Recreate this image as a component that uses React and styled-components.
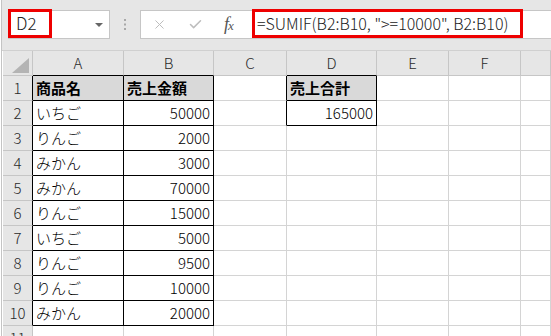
import styled, { createGlobalStyle } from "styled-components";
import { X, Check } from "lucide-react";

const GlobalStyle = createGlobalStyle({
  "*": { boxSizing: "border-box" },
  body: {
    margin: 0,
    background: "#ffffff",
    fontFamily: '"Noto Sans CJK JP", "Noto Sans", sans-serif',
    color: "#000",
  },
});

const Frame = styled.div({
  width: "551px",
  height: "336px",
  overflow: "hidden",
  paddingLeft: "1px",
  background: "#ffffff",
});

const Inner = styled.div({
  height: "100%",
  borderLeft: "1px solid #c4c4c4",
});

const Toolbar = styled.div({
  height: "51px",
  background: "#e6e6e6",
  borderBottom: "1px solid #d0d0d0",
  display: "flex",
  alignItems: "flex-start",
  paddingTop: "10px",
  paddingLeft: "6px",
});

const NameBox = styled.div({
  width: "102px",
  height: "29px",
  background: "#ffffff",
  border: "1px solid #c6c6c6",
  display: "flex",
  alignItems: "flex-start",
});

const RedFrame = styled.div(({ $width, $size, $pad }) => ({
  width: $width,
  height: "29px",
  marginTop: "-2px",
  marginLeft: "-1px",
  border: "3px solid #ee0000",
  fontSize: $size,
  fontWeight: 300,
  lineHeight: "22px",
  color: "#222",
  paddingLeft: $pad,
  whiteSpace: "nowrap",
}));

const Caret = styled.svg({
  marginLeft: "auto",
  marginRight: "6px",
  marginTop: "12px",
});

const Dots = styled.div({
  width: "30px",
  height: "29px",
  display: "flex",
  alignItems: "center",
  justifyContent: "center",
});

const ButtonBox = styled.div({
  width: "113px",
  height: "29px",
  background: "#ffffff",
  border: "1px solid #c6c6c6",
  display: "flex",
  alignItems: "center",
  gap: "21px",
  paddingLeft: "11px",
  color: "#bdbdbd",
});

const Fx = styled.span({
  fontFamily: '"Liberation Serif", serif',
  fontStyle: "italic",
  fontSize: "18px",
  lineHeight: "18px",
  color: "#555",
  letterSpacing: "-1px",
  "& small": { fontSize: "13px" },
});

const FormulaBar = styled.div({
  flex: 1,
  height: "29px",
  background: "#ffffff",
  borderTop: "1px solid #c6c6c6",
  borderBottom: "1px solid #c6c6c6",
  display: "flex",
  alignItems: "flex-start",
});

const Sheet = styled.div({
  paddingLeft: "1px",
  display: "grid",
  gridTemplateColumns: "30px 91px 90px 73px 90px 72px 72px 1fr",
  gridAutoRows: "25px",
});

const Cell = styled.div(({ $right, $bottom, $bg, $bold, $align }) => ({
  borderRight: `1px solid ${$right}`,
  borderBottom: `1px solid ${$bottom}`,
  background: $bg,
  fontWeight: $bold ? 700 : 300,
  textAlign: $align,
  fontSize: "15px",
  lineHeight: "24px",
  padding: "0 3px",
  whiteSpace: "nowrap",
  overflow: "hidden",
}));

const HeadCell = styled.div(({ $right, $bottom }) => ({
  borderRight: `1px solid ${$right}`,
  borderBottom: `1px solid ${$bottom}`,
  background: "#e6e6e6",
  color: "#2a2a2a",
  fontSize: "15px",
  fontWeight: 300,
  lineHeight: "24px",
  textAlign: "center",
}));

const Corner = styled.div({
  borderRight: "1px solid #c6c6c6",
  borderBottom: "1px solid #c6c6c6",
  background: "#e6e6e6",
  display: "flex",
  alignItems: "flex-end",
  justifyContent: "flex-end",
  padding: "0 3px 2px 0",
});

// last column is the partly visible G, whose letter falls off-screen
const columns = ["A", "B", "C", "D", "E", "F", ""];

const data = [
  ["商品名", "売上金額", "", "売上合計"],
  ["いちご", 50000, "", 165000],
  ["りんご", 2000],
  ["みかん", 3000],
  ["みかん", 70000],
  ["りんご", 15000],
  ["いちご", 5000],
  ["りんご", 9500],
  ["りんご", 10000],
  ["みかん", 20000],
  [],
];

// rows/cols are 1-based sheet positions, col 1 = A
const boxed = (r, c) =>
  (r >= 1 && r <= 10 && (c === 1 || c === 2)) || (c === 4 && (r === 1 || r === 2));

const GRID = "#d4d4d4";
const HEAD = "#c6c6c6";
const INK = "#000000";

const App = () => {
  return (
    <Frame>
      <GlobalStyle />
      <Inner>
        <Toolbar>
          <NameBox>
            <RedFrame $width="44px" $size="17px" $pad="5px">
              D2
            </RedFrame>
            <Caret width="8" height="4" viewBox="0 0 8 4">
              <path d="M0 0h8L4 4z" fill="#666" />
            </Caret>
          </NameBox>
          <Dots>
            <svg width="2" height="11" viewBox="0 0 2 11">
              <rect x="0" y="0" width="2" height="2" fill="#a8a8a8" />
              <rect x="0" y="4.5" width="2" height="2" fill="#a8a8a8" />
              <rect x="0" y="9" width="2" height="2" fill="#a8a8a8" />
            </svg>
          </Dots>
          <ButtonBox>
            <X size={15} strokeWidth={1.6} />
            <Check size={15} strokeWidth={2.4} />
            <Fx>
              f<small>x</small>
            </Fx>
          </ButtonBox>
          <FormulaBar>
            <RedFrame $width="271px" $size="16px" $pad="2px">
              =SUMIF(B2:B10, "&gt;=10000", B2:B10)
            </RedFrame>
          </FormulaBar>
        </Toolbar>
        <Sheet>
          <Corner>
            <svg width="17" height="15" viewBox="0 0 17 15">
              <path d="M17 0V15H0z" fill="#b4b4b4" />
            </svg>
          </Corner>
          {columns.map((col, i) => (
            <HeadCell
              key={`c${i}`}
              $right={HEAD}
              $bottom={boxed(1, i + 1) ? INK : HEAD}
            >
              {col}
            </HeadCell>
          ))}
          {data.map((row, r) => {
            const rowNo = r + 1;
            return [
              <HeadCell
                key={`h${rowNo}`}
                $right={boxed(rowNo, 1) ? INK : HEAD}
                $bottom={HEAD}
              >
                {rowNo}
              </HeadCell>,
              ...columns.map((col, i) => {
                const c = i + 1;
                const value = row[i] ?? "";
                const right =
                  boxed(rowNo, c) || boxed(rowNo, c + 1) ? INK : GRID;
                const bottom =
                  boxed(rowNo, c) || boxed(rowNo + 1, c) ? INK : GRID;
                const isTitle = rowNo === 1 && value !== "";
                return (
                  <Cell
                    key={`${c}-${rowNo}`}
                    $right={right}
                    $bottom={bottom}
                    $bg={isTitle ? "#d9d9d9" : "#ffffff"}
                    $bold={isTitle}
                    $align={typeof value === "number" ? "right" : "left"}
                  >
                    {value}
                  </Cell>
                );
              }),
            ];
          })}
        </Sheet>
      </Inner>
    </Frame>
  );
};

export default App;
